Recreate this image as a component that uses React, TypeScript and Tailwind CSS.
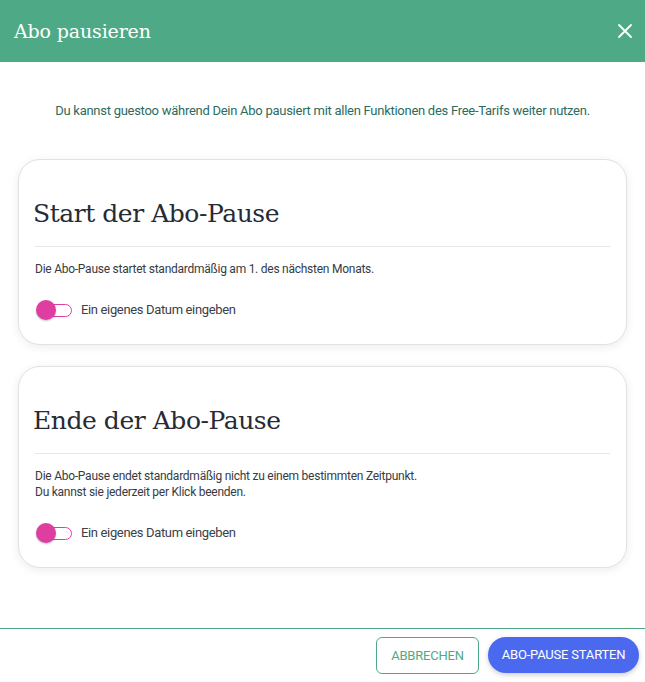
import { useState } from 'react'

const serif = { fontFamily: '"DejaVu Serif", "Liberation Serif", serif' }

function Toggle({ label }: { label: string }) {
  const [on, setOn] = useState(false)
  return (
    <button
      type="button"
      onClick={() => setOn(!on)}
      className="flex h-5 items-center gap-[9px] text-[13px] text-[#3b4049]"
    >
      <span className="relative ml-px flex h-5 w-[36px] items-center">
        <span className="ml-[2px] h-[13px] w-[34px] rounded-full border border-[#e03fa2] bg-white" />
        <span
          className={
            'absolute top-0 h-5 w-5 rounded-full bg-[#df3ea0] shadow-[0_1px_2px_rgba(0,0,0,0.25)] ' +
            (on ? 'left-[16px]' : 'left-0')
          }
        />
      </span>
      <span className="tracking-[-0.35px]">{label}</span>
    </button>
  )
}

function PauseCard({ title, lines }: { title: string; lines: string[] }) {
  return (
    <section className="rounded-[22px] border border-[#dfe3e4] bg-white px-[16px] pt-[38px] pb-[24px] shadow-[0_2px_10px_rgba(0,0,0,0.08)]">
      <h2 className="-ml-[2px] text-[25px] leading-8 font-normal tracking-[-0.45px] text-[#262b35]" style={serif}>
        {title}
      </h2>
      <div className="mt-[16px] h-px bg-[#e5e7e9]" />
      <div className="mt-[14px] text-[12px] leading-4 tracking-[-0.25px] text-[#363b44]">
        {lines.map((l) => (
          <p key={l}>{l}</p>
        ))}
      </div>
      <div className="mt-[23px]">
        <Toggle label="Ein eigenes Datum eingeben" />
      </div>
    </section>
  )
}

export default function App() {
  return (
    <div
      className="flex h-[682px] w-full flex-col bg-white"
      style={{ fontFamily: 'Roboto, "Liberation Sans", sans-serif' }}
    >
      <header className="flex h-[62px] shrink-0 items-center justify-between bg-[#4eaa86] pr-[11px] pl-[14px]">
        <h1 className="text-[19px] font-normal tracking-[-0.15px] text-white" style={serif}>
          Abo pausieren
        </h1>
        <button type="button" aria-label="Schließen" className="text-white">
          <svg width="18" height="18" viewBox="0 0 18 18" fill="none" stroke="currentColor" strokeWidth="1.8" strokeLinecap="round">
            <path d="M3 3l12 12M15 3L3 15" />
          </svg>
        </button>
      </header>

      <main className="flex-1 px-[18px] pt-[40px]">
        <p className="text-center text-[13px] leading-[18px] tracking-[-0.27px] text-[#2d6b60]">
          Du kannst guestoo während Dein Abo pausiert mit allen Funktionen des Free-Tarifs weiter nutzen.
        </p>
        <div className="mt-[39px] flex flex-col gap-[21px]">
          <PauseCard
            title="Start der Abo-Pause"
            lines={['Die Abo-Pause startet standardmäßig am 1. des nächsten Monats.']}
          />
          <PauseCard
            title="Ende der Abo-Pause"
            lines={[
              'Die Abo-Pause endet standardmäßig nicht zu einem bestimmten Zeitpunkt.',
              'Du kannst sie jederzeit per Klick beenden.'
            ]}
          />
        </div>
      </main>

      <footer className="flex h-[54px] shrink-0 items-start justify-end gap-[9px] border-t border-[#4eaa86] pt-[8px] pr-[6px]">
        <button
          type="button"
          className="h-[37px] w-[103px] rounded-[6px] border border-[#4eaa86] text-[13px] tracking-[-0.2px] text-[#4eaa86] uppercase"
        >
          Abbrechen
        </button>
        <button
          type="button"
          className="h-[36px] w-[151px] rounded-full bg-[#4a69ef] text-[13px] tracking-[-0.2px] text-white uppercase shadow-[0_2px_5px_rgba(0,0,0,0.2)]"
        >
          Abo-Pause starten
        </button>
      </footer>
    </div>
  )
}
